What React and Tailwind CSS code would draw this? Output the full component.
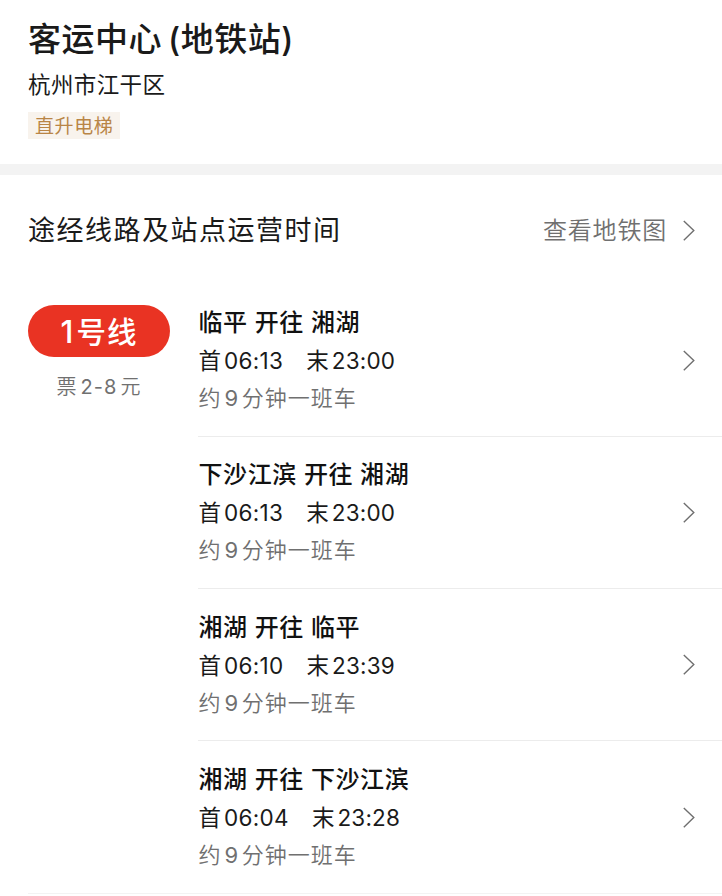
import React from "react";

const routes = [
  { from: "临平", to: "湘湖", first: "06:13", last: "23:00", interval: 9 },
  { from: "下沙江滨", to: "湘湖", first: "06:13", last: "23:00", interval: 9 },
  { from: "湘湖", to: "临平", first: "06:10", last: "23:39", interval: 9 },
  { from: "湘湖", to: "下沙江滨", first: "06:04", last: "23:28", interval: 9 },
];

function Chevron() {
  return (
    <svg
      className="w-[13px] h-[22px] shrink-0"
      viewBox="0 0 13 22"
      fill="none"
      stroke="#6f6f6f"
      strokeWidth="1.4"
    >
      <path d="M0.8 0.9 L10.8 10.6 L0.8 20.3" />
    </svg>
  );
}

function RouteRow({ route, isLast }) {
  return (
    <div
      className={`h-[152.2px] flex items-center justify-between pl-[0.5px] pr-[26px] pt-[1.4px] cursor-pointer ${
        isLast ? "" : "border-b border-[#ececec]"
      }`}
    >
      <div>
        <h3 className="text-[24px] leading-[38px] tracking-[0.6px] font-medium text-[#111]">
          {route.from} 开往 {route.to}
        </h3>
        <p className="flex text-[22.5px] leading-[38px] text-[#1a1a1a] [font-kerning:none]">
          <span>首</span>
          <span className="ml-[3px] tracking-[0.3px]">{route.first}</span>
          <span className="ml-[23px]">末</span>
          <span className="ml-[3px] tracking-[0.2px]">{route.last}</span>
        </p>
        <p className="flex text-[22px] leading-[37px] tracking-[1px] font-[350] text-[#707070]">
          <span>约</span>
          <span className="ml-[3px] font-normal">{route.interval}</span>
          <span className="ml-[2.5px]">分钟一班车</span>
        </p>
      </div>
      <Chevron />
    </div>
  );
}

export default function App() {
  return (
    <div className="w-[722px] h-[896px] overflow-hidden bg-white text-[#1a1a1a] font-['Inter','Noto_Sans_CJK_SC',sans-serif]">
      {/* Station */}
      <div className="h-[164px] pl-7 pt-[15px]">
        <h1 className="flex text-[33px] leading-[48px] tracking-[0.5px] font-medium">
          <span>客运中心</span>
          <span className="ml-[6px]">(</span>
          <span>地铁站</span>
          <span>)</span>
        </h1>
        <p className="mt-[4px] text-[22.5px] leading-[36px] tracking-[0.4px]">
          杭州市江干区
        </p>
        <span className="mt-[9px] block w-[92px] h-[27px] pl-[7px] bg-[#f8f3ed] text-[19px] leading-[29px] tracking-[0.6px] text-[#b98546]">
          直升电梯
        </span>
      </div>

      <div className="h-[11px] bg-[#f3f3f3]" />

      {/* Section header */}
      <div className="h-[109.4px] pl-7 pr-[26px] pt-[2px] flex items-center justify-between">
        <h2 className="text-[27px] leading-[40px] tracking-[1.5px]">
          途经线路及站点运营时间
        </h2>
        <div className="flex items-center gap-4 text-[24px] tracking-[0.8px] font-[350] text-[#707070]">
          <span>查看地铁图</span>
          <Chevron />
        </div>
      </div>

      {/* Line and its directions */}
      <div className="ml-7 flex border-b border-[#f3f3f3]">
        <div className="w-[170px] shrink-0 pt-[21px]">
          <div className="w-[142px] h-[52px] pt-[2px] rounded-full bg-[#e93323] text-white flex items-center justify-center text-[29.5px] tracking-[1px] font-medium">
            <span className="mr-[2px] text-[31px]">1</span>
            <span>号线</span>
          </div>
          <p className="w-[142px] mt-[10px] flex justify-center text-[20px] leading-[40px] tracking-[1px] font-[350] text-[#707070]">
            <span>票</span>
            <span className="mx-[3px] font-normal">2-8</span>
            <span>元</span>
          </p>
        </div>
        <div className="flex-1">
          {routes.map((route, index) => (
            <RouteRow
              key={index}
              route={route}
              isLast={index === routes.length - 1}
            />
          ))}
        </div>
      </div>
    </div>
  );
}
